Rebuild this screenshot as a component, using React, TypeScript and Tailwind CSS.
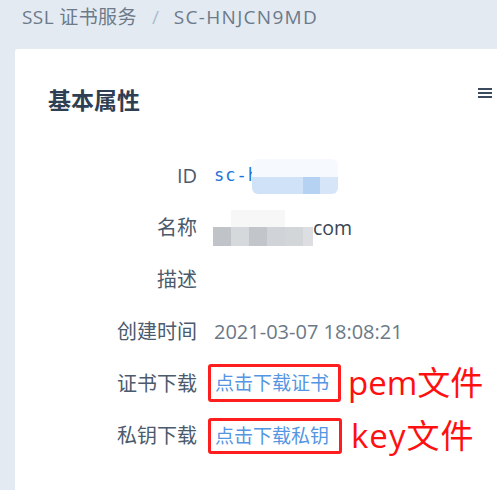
import React from "react";

const font = { fontFamily: '"Open Sans", "Noto Sans CJK SC", sans-serif' };

function Row({ label, children }: { label: string; children?: React.ReactNode }) {
  return (
    <div className="flex h-[52px] items-center">
      <div className="w-[149px] shrink-0 text-right text-[20px] text-[#4b5a6c]">{label}</div>
      <div className="ml-[17px] flex items-center">{children}</div>
    </div>
  );
}

export default function App() {
  return (
    <div
      className="h-[490px] w-[497px] overflow-hidden bg-[#e4eaf1]"
      style={font}
    >
      <div className="flex h-[34px] items-center pl-[22px] text-[19px] text-[#6c7a8a]">
        <span className="tracking-[0.4px]">SSL 证书服务</span>
        <span className="mx-[15px] text-[#a9bdd0]">/</span>
        <span className="tracking-[1.3px]">SC-HNJCN9MD</span>
      </div>
      <div className="ml-[15px] mt-[15px] h-[460px] w-[600px] rounded-tl-[3px] bg-white pl-[33px] pt-[36px]">
        <div className="flex h-[30px] w-[444px] items-center justify-between">
          <div className="text-[23px] font-bold text-[#2f3f53]">基本属性</div>
          <div className="flex flex-col gap-[2px] pb-[15px]">
            <div className="h-[2px] w-[14px] bg-[#3b4a5c]" />
            <div className="h-[2px] w-[14px] bg-[#3b4a5c]" />
            <div className="h-[2px] w-[14px] bg-[#3b4a5c]" />
          </div>
        </div>
        <div className="mt-[35px] flex flex-col">
          <Row label="ID">
            <span className="font-['DejaVu_Sans_Mono',monospace] text-[17px] tracking-[1px] text-[#1a73d9]">sc-h</span>
            <span className="relative ml-[-7px] h-[35px] w-[86px]">
              <span className="absolute left-0 top-0 h-[18px] w-[86px] rounded-t-[6px] bg-[#f6f9fd]" />
              <span className="absolute bottom-0 left-0 flex h-[17px] w-[86px] overflow-hidden rounded-b-[6px]">
                <span className="h-full w-[51px] bg-[#d0e2f7]" />
                <span className="h-full w-[17px] bg-[#b6d2f2]" />
                <span className="h-full w-[18px] bg-[#d6e6f8]" />
              </span>
            </span>
          </Row>
          <Row label="名称">
            <span className="relative h-[36px] w-[100px] -ml-[1px]">
              <span className="absolute left-[18px] top-[0px] h-[18px] w-[54px] bg-[#f7f7f8]" />
              <span className="absolute bottom-[0px] left-0 flex h-[19px] w-[100px]">
                <span className="h-full w-[18px] bg-[#c0c3c7]" />
                <span className="h-full w-[18px] bg-[#d6d9dc]" />
                <span className="h-full w-[18px] bg-[#c2c5c9]" />
                <span className="h-full w-[18px] bg-[#d0d3d7]" />
                <span className="h-full w-[18px] bg-[#d3d6d9]" />
                <span className="h-full w-[10px] bg-[#dcdee1]" />
              </span>
            </span>
            <span className="text-[19.5px] text-[#3a4653]">com</span>
          </Row>
          <Row label="描述" />
          <Row label="创建时间">
            <span className="text-[20px] text-[#6c7886]">2021-03-07 18:08:21</span>
          </Row>
          <Row label="证书下载">
            <span className="-ml-[6px] -mt-[3px] rounded-[3px] border-[3px] border-[#ff1e1e] pl-[4px] pr-[9px] py-[3px] text-[19px] leading-[26px] text-[#5596e2]">
              点击下载证书
            </span>
            <span className="ml-[7px] -mt-[2px] text-[33px] leading-[36px] text-[#ff1010]">pem文件</span>
          </Row>
          <Row label="私钥下载">
            <span className="-ml-[6px] rounded-[3px] border-[3px] border-[#ff1e1e] pl-[4px] pr-[10px] py-[2px] text-[19px] leading-[26px] text-[#5596e2]">
              点击下载私钥
            </span>
            <span className="ml-[9px] text-[33px] leading-[36px] tracking-[1px] text-[#ff1010]">key文件</span>
          </Row>
        </div>
      </div>
    </div>
  );
}
